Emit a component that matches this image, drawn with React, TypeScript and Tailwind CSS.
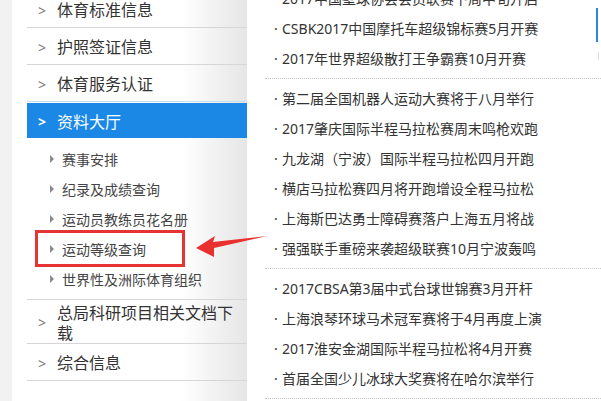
import React from "react";

interface NewsGroup {
  items: string[];
}

const TOP_MENU = ["体育标准信息", "护照签证信息", "体育服务认证"];

const SUB_MENU = [
  "赛事安排",
  "纪录及成绩查询",
  "运动员教练员花名册",
  "运动等级查询",
  "世界性及洲际体育组织",
];

const NEWS: NewsGroup[] = [
  {
    items: [
      "2017中国壁球协会会员联赛下周中旬开启",
      "CSBK2017中国摩托车超级锦标赛5月开赛",
      "2017年世界超级散打王争霸赛10月开赛",
    ],
  },
  {
    items: [
      "第二届全国机器人运动大赛将于八月举行",
      "2017肇庆国际半程马拉松赛周末鸣枪欢跑",
      "九龙湖（宁波）国际半程马拉松四月开跑",
      "横店马拉松赛四月将开跑增设全程马拉松",
      "上海斯巴达勇士障碍赛落户上海五月将战",
      "强强联手重磅来袭超级联赛10月宁波轰鸣",
    ],
  },
  {
    items: [
      "2017CBSA第3届中式台球世锦赛3月开杆",
      "上海浪琴环球马术冠军赛将于4月再度上演",
      "2017淮安金湖国际半程马拉松将4月开赛",
      "首届全国少儿冰球大奖赛将在哈尔滨举行",
    ],
  },
];

function MenuRow({ label, line = "border-[#d6d6d6]" }: { label: string; line?: string }) {
  return (
    <div className={`flex h-[37px] items-center border-b pt-[2px] ${line}`}>
      <span className="w-[30px] pl-[11px] text-[14px] text-[#777]">&gt;</span>
      <span className="text-[16px] text-[#333]">{label}</span>
    </div>
  );
}

function Sidebar() {
  return (
    <div className="flex h-full w-[247px] shrink-0">
      <div className="w-[12px] bg-[#f2f2f2]" />
      <div className="flex-1 bg-gradient-to-r from-white from-[72%] to-[#e6e6e6] pl-[15px]">
        <div className="-mt-[9px]">
          <MenuRow label={TOP_MENU[0]} />
          <MenuRow label={TOP_MENU[1]} />
          <MenuRow label={TOP_MENU[2]} line="border-[#c6dcf1]" />

          {/* active section */}
          <div className="mt-[1px] flex h-[35px] items-center bg-[#1b88e6] pt-[2px]">
            <span className="w-[30px] pl-[11px] text-[14px] font-bold text-white">&gt;</span>
            <span className="text-[16px] text-white">资料大厅</span>
          </div>
          <div className="border-b border-[#d6d6d6] pt-[6px] pb-[5px]">
            {SUB_MENU.map((item) => (
              <div key={item} className="flex h-[30px] items-center">
                <span className="ml-[23px] mr-[8px] h-0 w-0 border-y-[4px] border-l-[4px] border-y-transparent border-l-[#8a8a8a]" />
                <span className="text-[14px] text-[#444]">{item}</span>
              </div>
            ))}
          </div>

          <div className="flex h-[44px] items-center border-b border-[#d6d6d6] pt-[2px]">
            <span className="w-[30px] shrink-0 pl-[11px] text-[14px] text-[#777]">&gt;</span>
            <span className="w-[180px] text-[16px] leading-[20px] text-[#333]">总局科研项目相关文档下载</span>
          </div>
          <MenuRow label="综合信息" />
        </div>
      </div>
    </div>
  );
}

function NewsList() {
  return (
    <div className="ml-[18px] flex-1">
      <div className="-mt-[21px]">
        {NEWS.map((group, gi) => (
          <ul key={gi} className="border-b border-dotted border-[#c8c8c8] pt-[4px] pb-[5px]">
            {group.items.map((item) => (
              <li key={item} className="flex h-[30px] items-center text-[14px] text-[#333]">
                <span className="ml-[9px] w-[8px]">·</span>
                <span>{item}</span>
              </li>
            ))}
          </ul>
        ))}
      </div>
    </div>
  );
}

export default function App() {
  return (
    <div className="relative flex h-[401px] w-[601px] overflow-hidden bg-white font-['Noto_Sans','Noto_Sans_CJK_SC',sans-serif]">
      <Sidebar />
      <NewsList />

      {/* right edge marker of neighbouring box */}
      <div className="absolute left-[596px] top-[8px] h-[34px] w-[2px] bg-[#2b86e0]" />
      <div className="absolute left-[598px] top-[52px] h-[8px] w-[1px] bg-[#dcdcdc]" />

      {/* annotation: highlight box + arrow */}
      <div className="absolute left-[35px] top-[230px] h-[37px] w-[150px] border-[3px] border-[#e63434]" />
      <svg className="absolute left-0 top-0" width="601" height="401" viewBox="0 0 601 401">
        <polygon
          points="196,248 215,236 213,242 267,236 214,248 214,257"
          fill="#e8302f"
        />
      </svg>
    </div>
  );
}
